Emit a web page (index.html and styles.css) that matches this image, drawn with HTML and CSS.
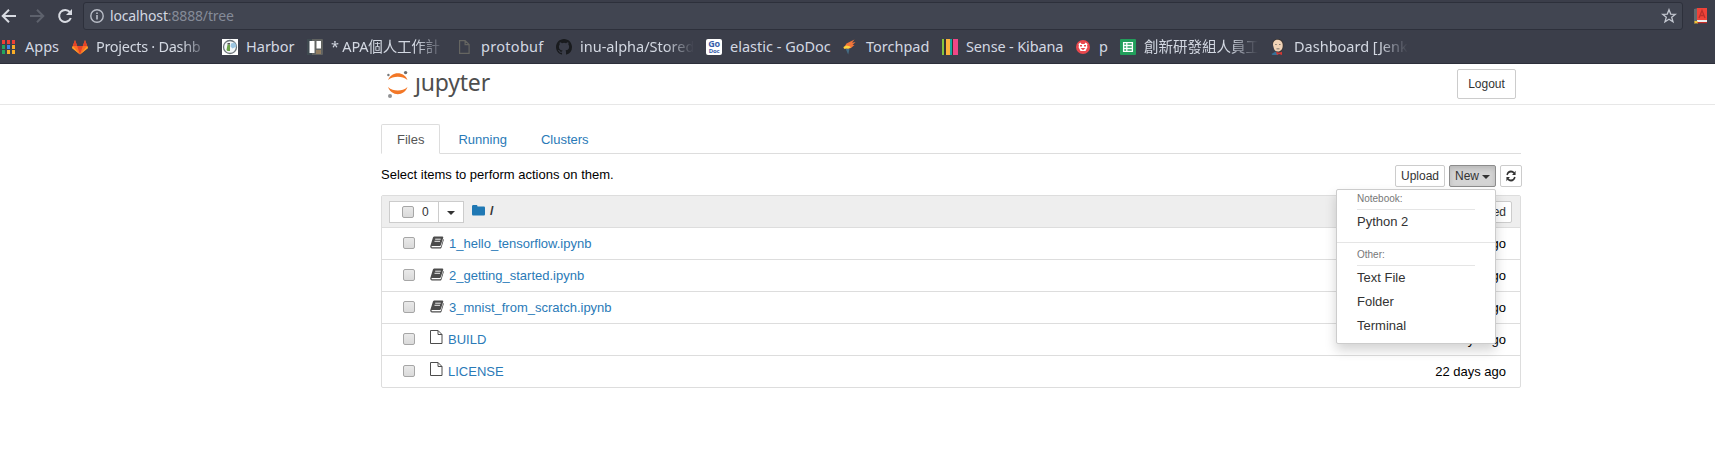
FILE: index.html
```html
<!DOCTYPE html>
<html lang="en">
<head>
<meta charset="utf-8">
<title>Home</title>
<link rel="stylesheet" href="styles.css">
</head>
<body>
<svg class="defs" width="0" height="0">
  <symbol id="book" viewBox="0 0 14 13"><path fill="#4c4c4c" d="M4.500.5h7.800c.8 0 1.100.5.9 1.200L10.900 9c-.2.700-.6 1-1.300 1H2.300c-.9 0-1.100.7-.6 1.300h8.100c.7 0 1-.3 1.300-1L13.300 3c.5.300.6.700.4 1.300l-2.100 6.900c-.2.800-.7 1.300-1.500 1.300H2C.6 12.500-.1 11 .4 9.800L2.800 2C3.100 1 3.600.5 4.500.5z"/><path stroke="#fff" stroke-width=".9" d="M5.200 3.200h5.500M4.500 5.300H10"/></symbol>
  <symbol id="page" viewBox="0 0 13 15"><path fill="#fff" stroke="currentColor" d="M.5.5h7.500l4 4v9H.5zM8 .5v4h4"/></symbol>
</svg>
<header class="browser">
  <div class="toolbar">
    <svg class="nav" width="68" height="20" fill="none" stroke-width="2"><path stroke="#d8dbe2" d="M16 10H3M9 3.700L2.700 10 9 16.300"/><path stroke="#5d616c" d="M30 10h13M37 3.700l6.300 6.300-6.300 6.300"/></svg>
    <svg class="reload" width="16" height="16" viewBox="0 0 16 16"><path fill="none" stroke="#d8dbe2" stroke-width="2" d="M12.900 4.200A6 6 0 1 0 13.800 10"/><path fill="#d8dbe2" d="M15 1v6H9z"/></svg>
    <div class="omnibox">
      <svg width="14" height="14" viewBox="0 0 14 14"><circle cx="7" cy="7" r="6.200" fill="none" stroke="#b9bdc7" stroke-width="1.400"/><path stroke="#b9bdc7" stroke-width="1.600" d="M7 6v4.500M7 3.400v1.500"/></svg>
      <span class="url"><b>localhost</b>:8888/tree</span>
      <svg class="star" width="16" height="16" viewBox="0 0 16 16"><path fill="none" stroke="#c3c7d0" stroke-width="1.300" d="M8 1.700l1.700 4.400 4.700.2-3.700 2.900 1.300 4.600L8 11.200l-4 2.600 1.300-4.600L1.600 6.300l4.700-.2z"/></svg>
    </div>
    <svg class="dict" width="14" height="16" viewBox="0 0 14 16"><path fill="#646a6e" d="M0 1l4-1v15l-3 .5-1-2z"/><path fill="#ef4339" d="M3 0h10v12H3z"/><path fill="#eee" d="M3 12h10v2H3z"/><path fill="#c92c27" d="M3 14h10v1.200H3z"/><path fill="none" stroke="#bb302b" stroke-width="1.300" d="M5 10l3-7.500L11 10M6 7.500h4"/><path fill="#f1c232" d="M.5 13h3v3l-1.500-1-1.500 1z"/></svg>
  </div>
  <nav class="bookmarks">
    <a class="bm apps"><svg width="16" height="16" viewBox="0 0 16 16"><path fill="#ef4035" d="M1 1h3v4H1zM6 1h3v4H6zM11 1h3v4h-3z"/><path fill="#23a55e" d="M1 6h3v4H1zM1 11h3v4H1z"/><path fill="#3c84ee" d="M6 6h3v4H6z"/><path fill="#f9ad28" d="M11 6h3v4h-3zM6 11h3v4H6zM11 11h3v4h-3z"/></svg><span>Apps</span></a>
    <a class="bm gitlab cut"><svg width="16" height="16" viewBox="0 0 16 16"><path fill="#fc6d26" d="M3 1l2.200 6h5.600L13 1l3 8-8 6.500L0 9z"/><path fill="#e24329" d="M5.200 7h5.600L8 15.500zM3 1l2.200 6H.8zM13 1l-2.200 6h4.400z"/><path fill="#fca326" d="M0 9l.8-2L8 15.500zM16 9l-.8-2L8 15.500z"/></svg><span>Projects · Dashb</span></a>
    <a class="bm harbor"><svg width="16" height="16" viewBox="0 0 16 16"><path fill="#fff" d="M0 0h16v16H0z"/><circle cx="8" cy="8" r="6.500" fill="#f4f8fa" stroke="#6c747a" stroke-width="1.300"/><path fill="#6ba348" d="M5.500 5.500h2.500v6.500H5.500l-1-1z"/><path fill="#555" d="M5.500 4h2.500v1.500H5.500z"/><path fill="#9cc6e2" d="M9 4.500l4-1 1.500 4-4 2-2-2z"/></svg><span>Harbor</span></a>
    <a class="bm trello cut"><svg width="16" height="16" viewBox="0 0 16 16"><rect width="16" height="16" rx="1" fill="#616361"/><path fill="#3f4a50" d="M0 0h5v16H0z"/><rect x="2.500" y="2" width="5" height="12" fill="#fff"/><rect x="9.500" y="2" width="4.500" height="7.500" fill="#fff"/><path fill="#927e62" d="M9 11h5v4H9z"/></svg><span>* APA個人工作計</span></a>
    <a class="bm proto"><svg width="16" height="16" viewBox="0 0 16 16"><path fill="none" stroke="#656561" stroke-width="1.200" d="M3.600 1.600h5.500l4 4V14.400H3.600zM9.100 1.600v4h4"/></svg><span>protobuf</span></a>
    <a class="bm github cut"><svg width="16" height="16" viewBox="0 0 16 16"><path fill="#191b1e" d="M8 0C3.580 0 0 3.580 0 8c0 3.540 2.290 6.530 5.470 7.590.4.070.55-.17.55-.38v-1.490c-2.010.37-2.530-.49-2.690-.94-.09-.23-.48-.94-.82-1.130-.28-.15-.68-.52-.01-.53.63-.01 1.080.58 1.230.82.72 1.210 1.870.87 2.330.66.070-.52.28-.87.51-1.070-1.780-.2-3.640-.89-3.640-3.950 0-.87.31-1.590.82-2.150-.08-.2-.36-1.020.08-2.120 0 0 .67-.21 2.200.82a7.600 7.600 0 0 1 4 0c1.530-1.040 2.200-.82 2.200-.82.44 1.100.16 1.920.08 2.120.51.56.82 1.270.82 2.150 0 3.070-1.870 3.750-3.650 3.950.29.25.54.73.54 1.480v2.200c0 .21.15.46.55.38A8 8 0 0 0 16 8c0-4.420-3.580-8-8-8z"/></svg><span>inu-alpha/Stored</span></a>
    <a class="bm godoc"><i class="go"><em>Go</em><em class="doc">Doc</em></i><span>elastic - GoDoc</span></a>
    <a class="bm torch"><svg width="16" height="16" viewBox="0 0 16 16"><path fill="#f0743a" d="M1.500 9L4.500 4.500 12.500.5 10 3.800l3.500-.8-3 3 2 0-3.500 3L6 10z"/><path fill="#ffd43d" d="M1.500 8l3-1.500 3 .8 1.500 1-3 1.500-4 0z"/><path fill="#456c83" d="M3.500 9.500l4 .5-1.300 5.500z"/></svg><span>Torchpad</span></a>
    <a class="bm kibana"><svg width="16" height="16" viewBox="0 0 16 16"><path fill="#86c43c" d="M0 0h2v16H0z"/><path fill="#333" d="M2 0h2v16H2z"/><path fill="#fdb33c" d="M4 0h4v16H4z"/><path fill="#16a8a0" d="M8 0h2v16H8z"/><path fill="#333" d="M10 0h1v16h-1z"/><path fill="#ef4686" d="M11 0h5v16h-5z"/></svg><span>Sense - Kibana</span></a>
    <a class="bm pp"><svg width="16" height="16" viewBox="0 0 16 16"><circle cx="8" cy="8" r="7" fill="#e9484e"/><path fill="#fff" d="M3.500 5l2-1.500L6.500 5h3l1-1.500 2 1.500-.5 2 .5 1-2 4H5.500l-2-4 .5-1z"/><path fill="#e9484e" d="M5 6h2v1.500H5zM9 6h2v1.500H9zM5.500 9h5L8 11.200z"/></svg><span>p</span></a>
    <a class="bm sheets cut"><svg width="16" height="16" viewBox="0 0 16 16"><rect width="16" height="16" rx="1" fill="#229e5b"/><path fill="none" stroke="#fff" stroke-width="1.300" d="M3.600 3.600h8.800v8.800H3.600zM3.600 6.500h8.800M3.600 9.500h8.800M6.800 3.600v8.800"/></svg><span>創新研發組人員工</span></a>
    <a class="bm jenkins cut"><svg width="16" height="16" viewBox="0 0 16 16"><path fill="#3a3330" d="M2.500 4C3 1 5.500-.2 8.500 0 12 0 14 3 13.500 7c0 3-1.500 5-3 6L5 12z"/><path fill="#f0d2b6" d="M3 6C3 2 5.500.5 8 .8 11.500 1.200 13 4 12.700 7c0 3-2 5.500-4.700 5.500S4 11 3.500 8z"/><path fill="#555" d="M5.200 5.200h1.500v.8H5.200zM9 5.200h1.500v.8H9zM6.500 9.500h3v.7h-3z"/><path fill="#387096" d="M1.500 15l4-2.500 3 3.500h-6z"/><path fill="#d33833" d="M6 12.800l3 1 3-1V16l-3-1-2 1z"/></svg><span>Dashboard [Jenk</span></a>
  </nav>
</header>

<div class="site-header">
  <div class="container head-row">
    <div class="logo">
      <svg width="24" height="30" viewBox="0 0 24 30"><path fill="#f37726" d="M2 12C4 7.500 7.500 5.200 11.800 5.200S20 7.500 21.500 12C18.500 9.400 15.500 8.700 11.800 8.700S4.800 9.400 2 12zM2 19c3 2.600 6 3.500 9.800 3.500s6.700-.9 9.700-3.500c-1.500 4.500-5.400 7.200-9.700 7.200S3.500 23.500 2 19z"/><circle cx="19.600" cy="4.600" r="1.700" fill="#6c6d6f"/><circle cx="2.400" cy="7" r="1.200" fill="#77787a"/><circle cx="4" cy="28" r="2" fill="#929395"/></svg>
      <span class="wordmark"><span class="j">j</span>upyter</span>
    </div>
    <button class="btn logout">Logout</button>
  </div>
</div>

<main class="container">
  <ul class="tabs"><li class="active">Files</li><li>Running</li><li>Clusters</li></ul>
  <div class="actions">
    <span class="hint">Select items to perform actions on them.</span>
    <div class="buttons">
      <button class="btn xs upload">Upload</button>
      <div class="new-wrap">
        <button class="btn xs new">New <i class="caret"></i></button>
        <div class="menu">
          <div class="group"><h6>Notebook:</h6><a>Python 2</a></div>
          <div class="group other"><h6>Other:</h6><a>Text File</a><a>Folder</a><a>Terminal</a></div>
        </div>
      </div>
      <button class="btn xs refresh"><svg width="10" height="12" viewBox="0 0 12 12" preserveAspectRatio="none"><path fill="none" stroke="#333" stroke-width="1.800" d="M1.300 5C2 2.700 3.800 1.500 6 1.500c1.500 0 2.700.5 3.700 1.700M10.700 7C10 9.300 8.200 10.500 6 10.500c-1.500 0-2.700-.5-3.700-1.700"/><path fill="#333" d="M11.500.8v4.200H7.300zM.5 11.200V7h4.200z"/></svg></button>
    </div>
  </div>
  <section class="list">
    <div class="list-head">
      <div class="select"><span class="sel"><i class="check"></i>0</span><span class="drop"><i class="caret"></i></span></div>
      <svg class="folder" width="13" height="11" viewBox="0 0 13 11"><path fill="#1f78b4" d="M0 1.500C0 .5.500 0 1.500 0h2.700c1 0 1.300.5 1.300 1.500h6c1 0 1.500.5 1.500 1.400v6c0 1-.5 1.500-1.500 1.500h-10C.5 10.400 0 9.900 0 8.900z"/></svg>
      <span class="crumb">/</span>
      <button class="btn xs modified">Last Modified</button>
    </div>
    <div class="row"><i class="check"></i><svg class="book" width="14" height="13"><use href="#book"/></svg><a>1_hello_tensorflow.ipynb</a><time>22 days ago</time></div>
    <div class="row"><i class="check"></i><svg class="book" width="14" height="13"><use href="#book"/></svg><a>2_getting_started.ipynb</a><time>22 days ago</time></div>
    <div class="row"><i class="check"></i><svg class="book" width="14" height="13"><use href="#book"/></svg><a>3_mnist_from_scratch.ipynb</a><time>22 days ago</time></div>
    <div class="row"><i class="check"></i><svg class="page" width="13" height="15"><use href="#page"/></svg><a>BUILD</a><time>22 days ago</time></div>
    <div class="row"><i class="check"></i><svg class="page" width="13" height="15"><use href="#page"/></svg><a>LICENSE</a><time>22 days ago</time></div>
  </section>
</main>
</body>
</html>
```
FILE: styles.css
```css
* { box-sizing: border-box; }
body { margin: 0; background: #fff; color: #000; font: 13px/20px "Liberation Sans", sans-serif; overflow: hidden; }
svg { display: block; flex: none; }
.defs { position: absolute; }

.browser { height: 64px; background: #3b3e4a; border-bottom: 1px solid #2c2f3a; font-family: "Noto Sans", "Noto Sans CJK TC", sans-serif; color: #d3d8e2; }
.toolbar { display: flex; height: 32px; padding-top: 2px; }
.nav { width: 50px; margin-top: 4px; }
.reload { margin: 6px 0 0 7px; }
.omnibox { display: flex; width: 1600px; height: 28px; margin-left: 10px; padding: 0 5px 0 6px; align-items: center; border: 1px solid #2d303b; border-radius: 3px; background: #414551; }
.url { margin-left: 6px; font-size: 14px; letter-spacing: -.15px; color: #858b98; }
.url b { font-weight: 400; color: #d3d8e2; }
.star { margin-left: auto; }
.dict { margin: 6px 0 0 11px; }

.bookmarks { display: flex; height: 31px; padding: 0 0 1px 1px; align-items: center; }
.bm { display: flex; flex: none; align-items: center; gap: 8px; white-space: nowrap; font-size: 14.500px; }
.bm > span { margin-top: -2px; }
.cut > span { width: 114px; -webkit-mask-image: linear-gradient(90deg, #000 75%, transparent); mask-image: linear-gradient(90deg, #000 75%, transparent); }
.apps { width: 71px; }
.gitlab, .trello, .github, .sheets { width: 150px; }
.gitlab { letter-spacing: -.3px; }
.harbor { width: 85px; }
.trello { width: 149px; letter-spacing: -.2px; }
.proto { width: 100px; gap: 9px; letter-spacing: .3px; }
.github { letter-spacing: 0; }
.godoc { width: 136px; }
.torch { width: 100px; }
.kibana { width: 133px; letter-spacing: -.15px; }
.pp { width: 45px; }
.go { display: flex; width: 16px; height: 16px; flex-direction: column; align-items: center; border-radius: 2px; background: #fff; color: #375eab; }
.go em { font: 700 9px/9px "Open Sans", sans-serif; letter-spacing: -.3px; }
.go .doc { font-size: 6px; line-height: 6px; letter-spacing: -.2px; }

.container { width: 1140px; margin-left: 381px; }
.site-header { height: 41px; border-bottom: 1px solid #e7e7e7; }
.head-row { display: flex; justify-content: space-between; align-items: flex-start; }
.logo { display: flex; height: 40px; padding: 4px 0 0 5px; }
.wordmark { margin: -1px 0 0 5px; font: 23px/30px "Noto Sans", sans-serif; letter-spacing: -.2px; color: #4e4e4e; }
.j { display: inline-block; clip-path: inset(9px -5px -5px -5px); }
.btn { display: block; margin: 0; border: 1px solid #ccc; border-radius: 2px; background: #fff; color: #333; font: 12px/18px "Liberation Sans", sans-serif; text-align: center; white-space: nowrap; }
.logout { width: 59px; height: 30px; margin: 5px 5px 0 0; padding: 0; }

.tabs { display: flex; gap: 2px; height: 30px; margin: 19px 0 0; padding: 0; border-bottom: 1px solid #ddd; list-style: none; color: #2a7ab7; }
.tabs li { height: 30px; padding: 5px 15px; border: 1px solid transparent; border-radius: 2px 2px 0 0; }
.tabs .active { border-color: #ddd #ddd #fff; background: #fff; color: #555; }
.actions { display: flex; height: 41px; padding-top: 11px; justify-content: space-between; }
.buttons { display: flex; gap: 4px; margin-right: -1px; }
.xs { height: 22px; padding: 1px 5px; }
.upload { width: 50px; }
.new-wrap { position: relative; }
.new { width: 47px; border-color: #8c8c8c; background: #d4d4d4; box-shadow: inset 0 3px 5px rgba(0,0,0,.125); }
.refresh { width: 22px; padding: 4px 5px; }
.caret { display: inline-block; border: 4px solid transparent; border-top-color: currentColor; border-bottom: 0; vertical-align: middle; }
.menu { position: absolute; z-index: 2; top: 24px; right: 0; width: 160px; height: 155px; border: 1px solid #ccc; border-radius: 2px; background: #fff; box-shadow: 0 6px 12px rgba(0,0,0,.175); color: #333; }
.group { height: 52px; padding: 0 20px; }
.menu h6 { height: 20px; margin: 0; border-bottom: 1px solid #e5e5e5; color: #777; font: 10px/17px "Liberation Sans", sans-serif; }
.menu a { display: block; height: 24px; line-height: 24px; }
.other { height: auto; border-top: 1px solid #e5e5e5; }
.other h6 { height: 23px; padding-top: 3px; }

.list { border: 1px solid #ddd; border-radius: 2px; }
.list-head { display: flex; height: 31px; padding: 5px 8px 0 7px; background: #eee; }
.select { display: flex; width: 75px; height: 22px; border: 1px solid #ccc; background: #fff; color: #333; font-size: 12px; }
.sel { display: flex; width: 49px; padding-left: 12px; gap: 8px; align-items: center; border-right: 1px solid #ccc; }
.drop { display: flex; flex: 1; padding-top: 2px; align-items: center; justify-content: center; }
.check { flex: none; width: 12px; height: 12px; border: 1px solid #a6a6a6; border-radius: 2px; background: linear-gradient(#e9e9e9, #dadada); }
.folder { margin: 4px 0 0 8px; }
.crumb { margin: 0 0 0 5px; color: #333; font-weight: 700; }
.modified { margin-left: auto; }
.row { display: flex; height: 32px; padding: 6px 14px 0 21px; border-top: 1px solid #ddd; }
.row .check { margin-top: 3px; }
.row a { margin-left: 5px; color: #2a7ab7; }
.row .book { margin: 2px 0 0 15px; }
.row .page { margin: 0 0 0 15px; color: #4c4c4c; }
.row time { margin-left: auto; }
```
